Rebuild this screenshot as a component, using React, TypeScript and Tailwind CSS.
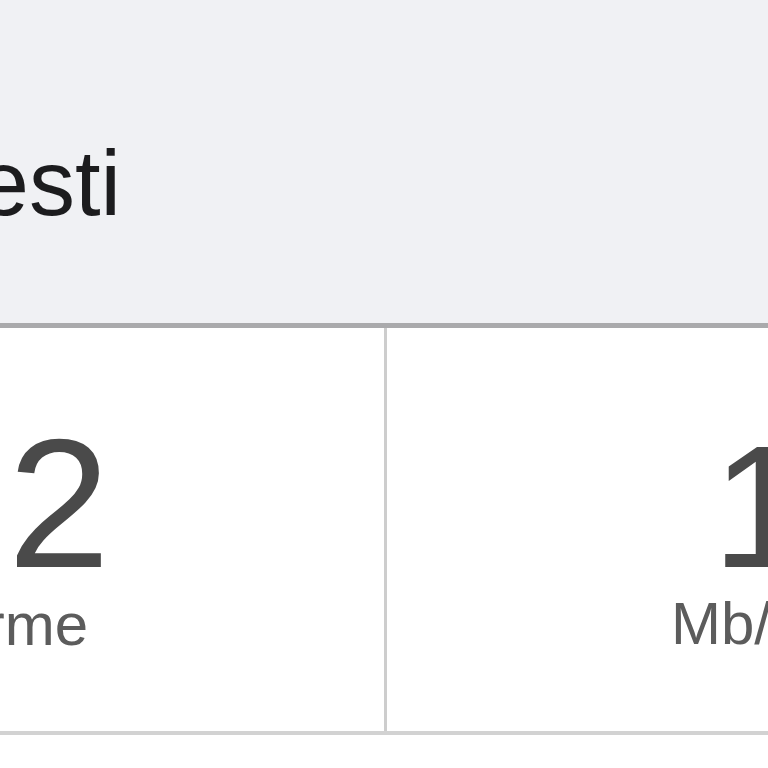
const stats = [
  { value: '2', unit: 'Norme' },
  { value: '1', unit: 'Mb/s' },
];

export default function App() {
  return (
    <div className="h-[768px] w-[768px] overflow-hidden bg-white font-['Liberation_Sans',Arial,sans-serif]">
      {/* section title */}
      <div className="h-[323px] bg-[#f0f1f4] pt-[137px]">
        <div className="flex w-[121px] justify-end">
          <h1 className="whitespace-nowrap text-[92px] leading-none text-[#1c1c1e]">Richiesti</h1>
        </div>
      </div>

      {/* stat cells */}
      <div className="grid h-[412px] grid-cols-[387px_1fr] border-t-[5px] border-b-[4px] border-t-[#aaaaac] border-b-[#d2d2d2]">
        <div className="flex flex-col items-end border-r-[3px] border-[#cdcdcd] pt-[83px]">
          <span className="mr-[274px] whitespace-nowrap text-[184px] leading-none text-[#4a4a4a]">{stats[0].value}</span>
          <span className="mr-[296px] whitespace-nowrap text-[60px] leading-none text-[#5c5c5c]">{stats[0].unit}</span>
        </div>
        <div className="flex flex-col items-start pt-[92px]">
          <span className="ml-[325px] whitespace-nowrap text-[174px] leading-none text-[#4a4a4a]">{stats[1].value}</span>
          <span className="ml-[284px] whitespace-nowrap text-[60px] leading-none text-[#5c5c5c]">{stats[1].unit}</span>
        </div>
      </div>
    </div>
  );
}
